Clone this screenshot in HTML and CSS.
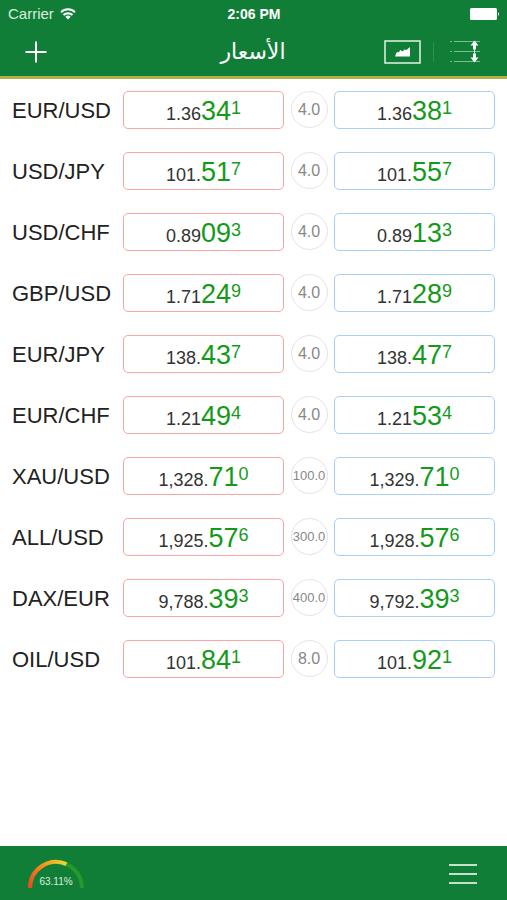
FILE: index.html
```html
<!DOCTYPE html>
<html lang="ar">
<head>
  <meta charset="UTF-8">
  <meta name="viewport" content="width=device-width, initial-scale=1.0">
  <title>الأسعار</title>
  <link rel="stylesheet" href="styles.css">
</head>
<body>
  <header class="header">
    <div class="status-bar">
      <div class="carrier">
        <span>Carrier</span>
        <svg width="16" height="12" viewBox="0 0 16 12" fill="none" stroke="#fff" stroke-width="2">
          <path d="M1 4.200a10 10 0 0 1 14 0M3.500 7a6.400 6.400 0 0 1 9 0"/>
          <path d="M5.400 8.700a3.700 3.700 0 0 1 5.200 0L8 11.400z" fill="#fff" stroke="none"/>
        </svg>
      </div>
      <div class="time">2:06 PM</div>
      <div class="battery">
        <svg width="30" height="12" viewBox="0 0 30 12" fill="#fff">
          <rect width="27" height="12" rx="1.500"/>
          <path d="M28 4q2 2 0 4z"/>
        </svg>
      </div>
    </div>
    <nav class="nav-bar">
      <div class="nav-left">
        <button class="icon-button" aria-label="Add symbol">
          <svg width="22" height="22" viewBox="0 0 22 22" stroke="#fff" stroke-width="2">
            <path d="M11 0.500v21M0.500 11h21"/>
          </svg>
        </button>
      </div>
      <h1 class="title" dir="rtl">الأسعار</h1>
      <div class="nav-right">
        <button class="icon-button" aria-label="Chart">
          <svg width="37" height="24" viewBox="0 0 37 24">
            <rect x="1" y="1" width="35" height="22" fill="none" stroke="#e4f3e8" stroke-width="1.500"/>
            <path d="M11 16.500l1.500-4 2.500-.5 1.500-2 2 1.500 2-2 2 .5 3.500-3v9.500z" fill="#fff"/>
          </svg>
        </button>
        <span class="divider"></span>
        <button class="icon-button" aria-label="Reorder">
          <svg width="31" height="24" viewBox="0 0 31 24">
            <path d="M0 1.500h2M0 11.500h2M0 21.500h2M4 1.500h26M4 11.500h26M4 21.500h26" stroke="#7dbd8e" stroke-width="1"/>
            <path d="M24.500 0.500l4 5h-2.500v4h-3v-4h-2.500zM24.500 22.500l4-5h-2.500v-4h-3v4h-2.500z" fill="#fff"/>
            <path d="M24.500 9v5" stroke="#d5ecda"/>
          </svg>
        </button>
      </div>
    </nav>
  </header>

  <main class="content">
    <table class="rates">
      <colgroup>
        <col class="col-symbol">
        <col>
        <col class="col-spread">
        <col>
      </colgroup>
      <tbody>
        <tr>
          <th scope="row">EUR/USD</th>
          <td><button class="price bid">1.36<b>34</b><sup>1</sup></button></td>
          <td><span class="spread">4.0</span></td>
          <td><button class="price ask">1.36<b>38</b><sup>1</sup></button></td>
        </tr>
        <tr>
          <th scope="row">USD/JPY</th>
          <td><button class="price bid">101.<b>51</b><sup>7</sup></button></td>
          <td><span class="spread">4.0</span></td>
          <td><button class="price ask">101.<b>55</b><sup>7</sup></button></td>
        </tr>
        <tr>
          <th scope="row">USD/CHF</th>
          <td><button class="price bid">0.89<b>09</b><sup>3</sup></button></td>
          <td><span class="spread">4.0</span></td>
          <td><button class="price ask">0.89<b>13</b><sup>3</sup></button></td>
        </tr>
        <tr>
          <th scope="row">GBP/USD</th>
          <td><button class="price bid">1.71<b>24</b><sup>9</sup></button></td>
          <td><span class="spread">4.0</span></td>
          <td><button class="price ask">1.71<b>28</b><sup>9</sup></button></td>
        </tr>
        <tr>
          <th scope="row">EUR/JPY</th>
          <td><button class="price bid">138.<b>43</b><sup>7</sup></button></td>
          <td><span class="spread">4.0</span></td>
          <td><button class="price ask">138.<b>47</b><sup>7</sup></button></td>
        </tr>
        <tr>
          <th scope="row">EUR/CHF</th>
          <td><button class="price bid">1.21<b>49</b><sup>4</sup></button></td>
          <td><span class="spread">4.0</span></td>
          <td><button class="price ask">1.21<b>53</b><sup>4</sup></button></td>
        </tr>
        <tr>
          <th scope="row">XAU/USD</th>
          <td><button class="price bid">1,328.<b>71</b><sup>0</sup></button></td>
          <td><span class="spread spread-long">100.0</span></td>
          <td><button class="price ask">1,329.<b>71</b><sup>0</sup></button></td>
        </tr>
        <tr>
          <th scope="row">ALL/USD</th>
          <td><button class="price bid">1,925.<b>57</b><sup>6</sup></button></td>
          <td><span class="spread spread-long">300.0</span></td>
          <td><button class="price ask">1,928.<b>57</b><sup>6</sup></button></td>
        </tr>
        <tr>
          <th scope="row">DAX/EUR</th>
          <td><button class="price bid">9,788.<b>39</b><sup>3</sup></button></td>
          <td><span class="spread spread-long">400.0</span></td>
          <td><button class="price ask">9,792.<b>39</b><sup>3</sup></button></td>
        </tr>
        <tr>
          <th scope="row">OIL/USD</th>
          <td><button class="price bid">101.<b>84</b><sup>1</sup></button></td>
          <td><span class="spread">8.0</span></td>
          <td><button class="price ask">101.<b>92</b><sup>1</sup></button></td>
        </tr>
      </tbody>
    </table>
  </main>

  <footer class="footer">
    <svg class="gauge" width="56" height="30" viewBox="0 0 56 30">
      <defs>
        <linearGradient id="gauge-fill" gradientUnits="userSpaceOnUse" x1="0" y1="28" x2="38" y2="3">
          <stop offset="0" stop-color="#e8481c"/>
          <stop offset="0.600" stop-color="#f29a24"/>
          <stop offset="1" stop-color="#ecd92c"/>
        </linearGradient>
      </defs>
      <g fill="none" stroke-width="4">
        <path d="M2 29a26 26 0 0 1 52 0" stroke="#259a2c"/>
        <path d="M2 29A26 26 0 0 1 38.400 5.200" stroke="url(#gauge-fill)"/>
      </g>
      <text x="28" y="26" text-anchor="middle">63.11%</text>
    </svg>
    <button class="icon-button" aria-label="Menu">
      <svg width="30" height="22" viewBox="0 0 30 22" stroke="#c4e3cc" stroke-width="2">
        <path d="M1 2h28M1 11h28M1 20h28"/>
      </svg>
    </button>
  </footer>
</body>
</html>
```

FILE: styles.css
```css
* {
  box-sizing: border-box;
}
body {
  display: flex;
  flex-direction: column;
  min-height: 100vh;
  margin: 0;
  background: #fff;
  color: #222;
  font-family: "Liberation Sans", Arial, sans-serif;
}
svg {
  display: block;
}
.header {
  background: #117e37;
  color: #fff;
  border-bottom: 3px solid #b5ad45;
}
.status-bar {
  display: grid;
  grid-template-columns: 1fr auto 1fr;
  align-items: center;
  height: 27px;
  padding: 0 7px 0 8px;
  font-size: 15px;
}
.carrier {
  display: flex;
  align-items: center;
  gap: 6px;
  color: #d9eedf;
}
.time {
  font-size: 14px;
  font-weight: bold;
}
.battery {
  justify-self: end;
}
.nav-bar {
  display: grid;
  grid-template-columns: 1fr auto 1fr;
  align-items: center;
  height: 49px;
  padding: 0 26px 0 25px;
}
.nav-left {
  display: flex;
}
.nav-right {
  display: flex;
  align-items: center;
  justify-content: flex-end;
}
.title {
  margin: 0;
  font-family: "DejaVu Sans", sans-serif;
  font-size: 22px;
  font-weight: normal;
  line-height: 32px;
}
.icon-button {
  padding: 0;
  border: none;
  background: none;
  cursor: pointer;
}
.divider {
  width: 1px;
  height: 20px;
  margin: 0 16px 0 12px;
  background: #2e9150;
}
.content {
  flex: 1;
  padding-right: 12px;
}
.rates {
  width: 100%;
  table-layout: fixed;
  border-collapse: collapse;
}
.col-symbol {
  width: 123px;
}
.col-spread {
  width: 50px;
}
.rates th,
.rates td {
  height: 61px;
  padding: 0;
}
.rates th {
  padding: 2px 0 0 12px;
  text-align: left;
  font-size: 22px;
  font-weight: 300;
}
.price {
  display: flex;
  align-items: baseline;
  justify-content: center;
  width: 100%;
  height: 38px;
  padding: 2px 0 0;
  border: 1px solid;
  border-radius: 5px;
  background: #fff;
  color: #333;
  font-family: inherit;
  font-size: 18px;
  line-height: 34px;
  cursor: pointer;
}
.bid {
  border-color: #f9a3a6;
}
.ask {
  border-color: #a9d0f8;
}
.price b {
  color: #149a1a;
  font-size: 27px;
  font-weight: normal;
}
.price sup {
  align-self: flex-start;
  color: #149a1a;
  font-size: 18px;
  line-height: 28px;
}
.spread {
  display: flex;
  align-items: center;
  justify-content: center;
  width: 37px;
  height: 37px;
  margin: 0 auto;
  border: 1px solid #e6e2e3;
  border-radius: 50%;
  color: #888;
  font-size: 16px;
}
.spread-long {
  font-size: 13px;
}
.footer {
  display: flex;
  align-items: center;
  justify-content: space-between;
  height: 54px;
  padding: 2px 29px 0 28px;
  background: #117e37;
}
.gauge text {
  fill: #d9eedf;
  font-size: 10px;
}
```
